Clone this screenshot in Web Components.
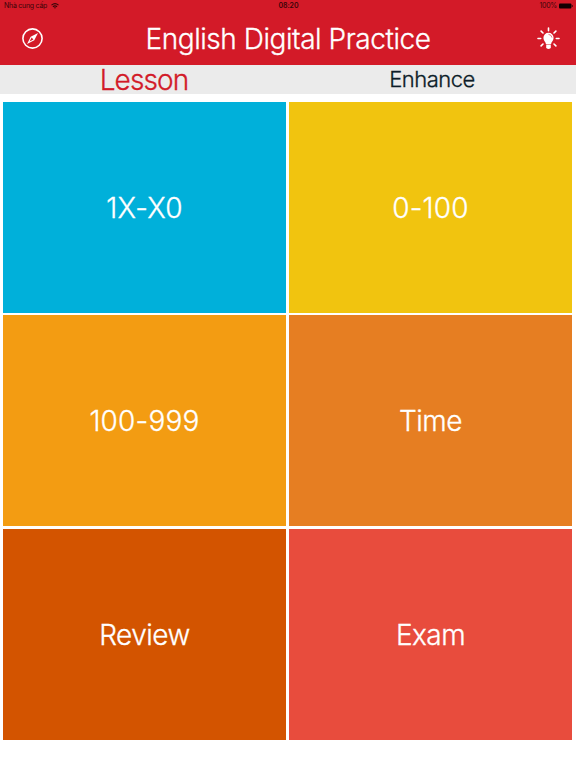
<!DOCTYPE html>
<html lang="en">
<head>
<meta charset="utf-8">
<title>English Digital Practice</title>
<style>
	body {
		background: #fff;
		font-family: Inter, "Liberation Sans", sans-serif;
		height: 768px;
		margin: 0;
		overflow: hidden;
		width: 576px;
	}
</style>
</head>
<body>
<practice-app></practice-app>

<script>
class StatusBar extends HTMLElement {
	constructor() {
		super();
		this.attachShadow( { mode: 'open' } );
	}

	connectedCallback() {
		this.shadowRoot.innerHTML = `
		<style>
			:host {
				align-items: center;
				box-sizing: border-box;
				color: #3a0508;
				display: grid;
				font-size: 7px;
				grid-template-columns: 1fr auto 1fr;
				height: 12px;
				letter-spacing: -.25px;
				line-height: 12px;
				padding: 0 3px 0 4px;
			}

			div {
				align-items: center;
				display: flex;
				gap: 3.5px;
			}

			.time { font-weight: 600; letter-spacing: -.1px; }
			.battery { gap: 2px; justify-content: flex-end; }
			svg { display: block; }
		</style>

		<div class="carrier">
			<span>Nhà cung cấp</span>
			<svg width="8" height="6" viewBox="0 0 8 6" fill="none" stroke="currentColor" stroke-width="1.1">
				<path d="M.5 2.1Q4-.9 7.5 2.1M1.9 3.7Q4 2 6.1 3.7"/>
				<path d="M4 5.7 2.9 4.6Q4 3.7 5.1 4.6Z" fill="currentColor" stroke="none"/>
			</svg>
		</div>
		<span class="time">08:20</span>
		<div class="battery">
			<span>100%</span>
			<svg width="14" height="6" viewBox="0 0 14 6" fill="#120002">
				<rect y=".4" width="12.4" height="5.2" rx="1"/>
				<path d="M12.8 2q1 .2 1 1t-1 1z"/>
			</svg>
		</div>
	`;
	}
}

class NavBar extends HTMLElement {
	constructor() {
		super();
		this.attachShadow( { mode: 'open' } );
	}

	connectedCallback() {
		this.shadowRoot.innerHTML = `
		<style>
			:host {
				align-items: center;
				color: #fff;
				display: grid;
				grid-template-columns: 1fr auto 1fr;
				height: 53px;
			}

			h1 {
				-webkit-text-stroke: .3px;
				font-size: 28px;
				font-weight: 300;
				letter-spacing: -.45px;
				line-height: 51px;
				margin: 0;
				padding-top: 2px;
				white-space: nowrap;
			}

			::slotted(svg) { display: block; }
			::slotted([slot="left"]) { margin-left: 21px; }
			::slotted([slot="right"]) { justify-self: end; margin-right: 16px; }
		</style>

		<slot name="left"></slot>
		<h1><slot></slot></h1>
		<slot name="right"></slot>
	`;
	}
}

class TabItem extends HTMLElement {
	constructor() {
		super();
		this.attachShadow( { mode: 'open' } );
	}

	connectedCallback() {
		this.shadowRoot.innerHTML = `
		<style>
			:host {
				-webkit-text-stroke: .3px;
				align-items: center;
				color: #0c1c28;
				display: flex;
				flex: 1;
				font-size: 22px;
				font-weight: 300;
				justify-content: center;
				letter-spacing: -.5px;
				line-height: 29px;
			}

			:host([selected]) {
				color: #d21a28;
				font-size: 28px;
				letter-spacing: -.9px;
				line-height: 30px;
			}
		</style>

		<slot></slot>
	`;
	}
}

class LessonTile extends HTMLElement {
	constructor() {
		super();
		this.attachShadow( { mode: 'open' } );
	}

	connectedCallback() {
		this.shadowRoot.innerHTML = `
		<style>
			:host {
				-webkit-text-stroke: .3px;
				align-items: center;
				background: var(--tile-color);
				color: #fff;
				display: flex;
				font-size: 28px;
				font-weight: 300;
				justify-content: center;
				letter-spacing: var(--tracking, -.55px);
				line-height: 34px;
			}
		</style>

		<slot></slot>
	`;
	}
}

class PracticeApp extends HTMLElement {
	constructor() {
		super();
		this.attachShadow( { mode: 'open' } );
	}

	connectedCallback() {
		this.shadowRoot.innerHTML = `
		<style>
			:host { display: block; }

			header {
				background: #d31a28;
				height: 65px;
			}

			nav {
				background: #ebebeb;
				display: flex;
				height: 29px;
			}

			main {
				display: grid;
				gap: 2.4px 3px;
				grid-template-columns: 283px 283px;
				grid-template-rows: repeat(3, 211px);
				padding: 8px 3px 0;
			}

			.digits { --tracking: .2px; }

			.last {
				box-sizing: border-box;
				padding-top: 2px;
			}
		</style>

		<header>
			<status-bar></status-bar>
			<nav-bar>
				<svg slot="left" width="23" height="23" viewBox="0 0 23 23" fill="none" stroke="#fff">
					<circle cx="11.5" cy="11.5" r="9.6" stroke-width="1.6"/>
					<path d="M17 6.1 13.3 13.2 6.1 16.9 9.7 9.8Z" fill="#fff" stroke="none"/>
					<path d="M10.6 10.6 12.4 12.4 8.6 14.4Z" fill="#d31a28" stroke="none"/>
				</svg>
				English Digital Practice
				<svg slot="right" width="23" height="23" viewBox="0 0 23 23" fill="none" stroke="#fff" stroke-width="1.6" stroke-linecap="round">
					<path d="M11.5 1v2.7M4.1 4.1 6 6M18.9 4.1 17 6M1 11.5h2.7M19.3 11.5H22M4.1 18.9 6 17M18.9 18.9 17 17"/>
					<path d="M11.5 5.8a5.1 5.1 0 0 0-5.1 5.1c0 2.8 2.3 3.8 2.5 6.1h5.2c.2-2.3 2.5-3.3 2.5-6.1a5.1 5.1 0 0 0-5.1-5.1z" fill="#fff" stroke="none"/>
					<path d="M9.2 17.6h4.6v2.7q0 1.6-2.3 1.6t-2.3-1.6z" fill="#fff" stroke="none"/>
					<path d="M11.9 7.4q2.6.2 3 2.8" stroke="#d31a28" stroke-width=".6"/>
				</svg>
			</nav-bar>
		</header>
		<nav>
			<tab-item selected>Lesson</tab-item>
			<tab-item>Enhance</tab-item>
		</nav>
		<main>
			<lesson-tile class="digits" style="--tile-color: #00b0da">1X-X0</lesson-tile>
			<lesson-tile class="digits" style="--tile-color: #f1c40f">0-100</lesson-tile>
			<lesson-tile class="digits" style="--tile-color: #f39c12">100-999</lesson-tile>
			<lesson-tile style="--tile-color: #e67e22">Time</lesson-tile>
			<lesson-tile class="last" style="--tile-color: #d35400">Review</lesson-tile>
			<lesson-tile class="last" style="--tile-color: #e84c3d">Exam</lesson-tile>
		</main>
	`;
	}
}

customElements.define('status-bar', StatusBar);
customElements.define('nav-bar', NavBar);
customElements.define('tab-item', TabItem);
customElements.define('lesson-tile', LessonTile);
customElements.define('practice-app', PracticeApp);
</script>
</body>
</html>
